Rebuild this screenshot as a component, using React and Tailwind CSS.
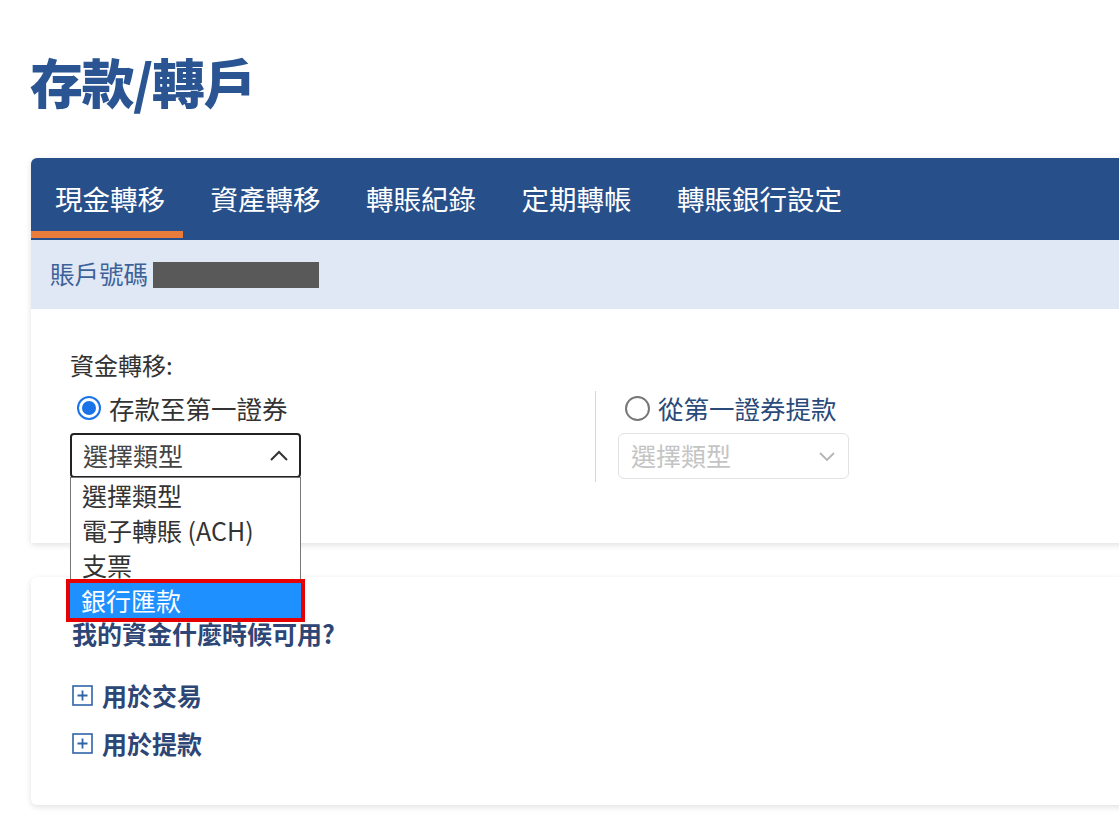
import React from 'react';

const font = { fontFamily: '"Noto Sans CJK TC", "Noto Sans", sans-serif' };

const tabs = ['現金轉移', '資產轉移', '轉賬紀錄', '定期轉帳', '轉賬銀行設定'];

const PlusBox = () => (
  <svg width="21" height="21" viewBox="0 0 21 21" className="shrink-0">
    <rect x="1" y="1" width="19" height="19" fill="none" stroke="#2f64a8" strokeWidth="1.6" />
    <path d="M10.5 5.5v10M5.5 10.5h10" stroke="#2f64a8" strokeWidth="1.8" />
  </svg>
);

export default function App() {
  return (
    <div className="w-[1119px] h-[824px] overflow-hidden bg-white relative" style={font}>
      <h1 className="pl-[30px] pt-[44px] text-[53px] leading-[74px] font-black text-[#2a5592] tracking-[-1.5px]">存款/轉戶</h1>

      {/* main card */}
      <div className="ml-[31px] mt-[40px] w-[1120px] bg-white rounded-t-md shadow-[0_2px_6px_rgba(0,0,0,0.12)]">
        <div className="h-[82px] bg-[#27508b] rounded-t-md flex items-stretch pl-[24px] gap-[45.5px]">
          {tabs.map((t, i) => (
            <div key={t} className="relative flex items-center text-white text-[27.5px]">
              {t}
              {i === 0 && <span className="absolute left-[-24px] right-[-18px] bottom-[2px] h-[7px] bg-[#ea7c3b]" />}
            </div>
          ))}
        </div>
        <div className="h-[69px] bg-[#dfe8f4] flex items-center pl-[19px] gap-[5px]">
          <span className="text-[24.5px] text-[#3d6199]">賬戶號碼</span>
          <span className="w-[166px] h-[26px] bg-[#595959]" />
        </div>
        <div className="h-[234px] pl-[39px] pt-[40px]">
          <div className="text-[24px] text-[#333] leading-[32px]">資金轉移:</div>
          <div className="flex mt-[12px]">
            <div className="w-[263px]">
              <label className="flex items-center gap-[8px] pl-[7px] h-[30px]">
                <span className="w-[24px] h-[24px] rounded-full border-2 border-[#1a73e8] flex items-center justify-center">
                  <span className="w-[14px] h-[14px] rounded-full bg-[#1a73e8]" />
                </span>
                <span className="text-[25.5px] text-[#333]">存款至第一證券</span>
              </label>
              <div className="relative mt-[10px] w-[231px]">
                <div className="h-[45px] border-2 border-[#222] rounded-[4px] flex items-center justify-between pl-[11px] pr-[10px]">
                  <span className="text-[25px] text-[#444]">選擇類型</span>
                  <svg width="20" height="12" viewBox="0 0 20 12"><path d="M2 10l8-8 8 8" fill="none" stroke="#333" strokeWidth="2" /></svg>
                </div>
                <div className="absolute left-0 top-[44px] w-[231px] bg-white border border-[#777] z-10 text-[25px] text-[#333] leading-[35px]">
                  <div className="pl-[11px]">選擇類型</div>
                  <div className="pl-[11px]">電子轉賬 (ACH)</div>
                  <div className="pl-[11px]">支票</div>
                  <div className="pl-[11px] h-[35px] bg-[#1e90ff] text-white outline-4 outline-[#e60000] -mx-[1px]">銀行匯款</div>
                </div>
              </div>
            </div>
            <div className="w-[1px] h-[91px] bg-[#d6d6d6] mt-[-2px] ml-[262px]" />
            <div className="pl-[22px]">
              <label className="flex items-center gap-[8px] pl-[7px] h-[30px]">
                <span className="w-[25px] h-[25px] rounded-full border-2 border-[#777]" />
                <span className="text-[25.5px] text-[#2a4a7a]">從第一證券提款</span>
              </label>
              <div className="mt-[10px] w-[231px] h-[46px] border border-[#e3e3e3] rounded-[6px] flex items-center justify-between pl-[12px] pr-[12px]">
                <span className="text-[25px] text-[#c4c4c4]">選擇類型</span>
                <svg width="18" height="11" viewBox="0 0 18 11"><path d="M2 2l7 7 7-7" fill="none" stroke="#b5b5b5" strokeWidth="1.8" /></svg>
              </div>
            </div>
          </div>
        </div>
      </div>

      {/* second card */}
      <div className="ml-[31px] mt-[34px] w-[1120px] h-[228px] bg-white rounded-md shadow-[0_2px_6px_rgba(0,0,0,0.12)] pl-[41px] pt-[40px]">
        <div className="text-[25px] font-bold text-[#2d4675] leading-[32px]">我的資金什麼時候可用?</div>
        <div className="mt-[28px] flex items-center gap-[9px]">
          <PlusBox />
          <span className="text-[25px] font-bold text-[#2d4675]">用於交易</span>
        </div>
        <div className="mt-[10px] flex items-center gap-[9px]">
          <PlusBox />
          <span className="text-[25px] font-bold text-[#2d4675]">用於提款</span>
        </div>
      </div>
    </div>
  );
}
